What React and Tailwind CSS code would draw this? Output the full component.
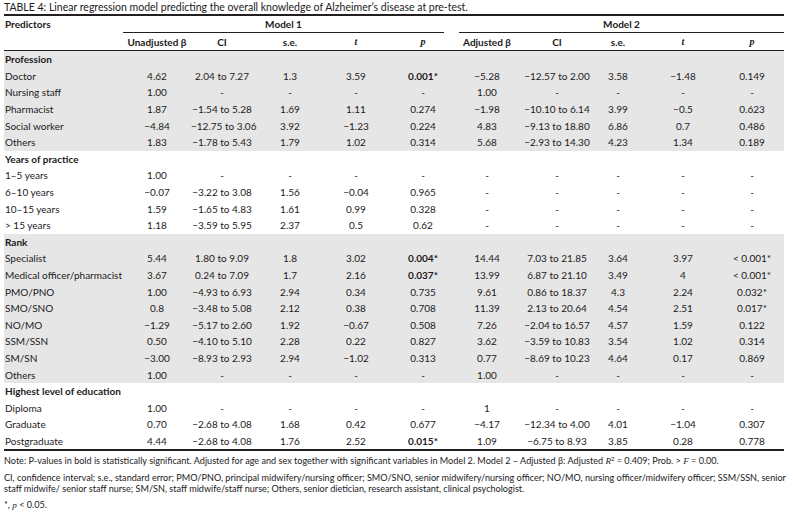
import React from "react";

const M = "\u2212";
const groups = [
  {
    title: "Profession",
    gray: true,
    rows: [
      ["Doctor", "4.62", "2.04 to 7.27", "1.3", "3.59", "B0.001*", `${M}5.28`, `${M}12.57 to 2.00`, "3.58", `${M}1.48`, "0.149"],
      ["Nursing staff", "1.00", "-", "-", "-", "-", "1.00", "-", "-", "-", "-"],
      ["Pharmacist", "1.87", `${M}1.54 to 5.28`, "1.69", "1.11", "0.274", `${M}1.98`, `${M}10.10 to 6.14`, "3.99", `${M}0.5`, "0.623"],
      ["Social worker", `${M}4.84`, `${M}12.75 to 3.06`, "3.92", `${M}1.23`, "0.224", "4.83", `${M}9.13 to 18.80`, "6.86", "0.7", "0.486"],
      ["Others", "1.83", `${M}1.78 to 5.43`, "1.79", "1.02", "0.314", "5.68", `${M}2.93 to 14.30`, "4.23", "1.34", "0.189"],
    ],
  },
  {
    title: "Years of practice",
    gray: false,
    rows: [
      ["1\u20135 years", "1.00", "-", "-", "-", "-", "-", "-", "-", "-", "-"],
      ["6\u201310 years", `${M}0.07`, `${M}3.22 to 3.08`, "1.56", `${M}0.04`, "0.965", "-", "-", "-", "-", "-"],
      ["10\u201315 years", "1.59", `${M}1.65 to 4.83`, "1.61", "0.99", "0.328", "-", "-", "-", "-", "-"],
      ["> 15 years", "1.18", `${M}3.59 to 5.95`, "2.37", "0.5", "0.62", "-", "-", "-", "-", "-"],
    ],
  },
  {
    title: "Rank",
    gray: true,
    rows: [
      ["Specialist", "5.44", "1.80 to 9.09", "1.8", "3.02", "B0.004*", "14.44", "7.03 to 21.85", "3.64", "3.97", "< 0.001*"],
      ["Medical officer/pharmacist", "3.67", "0.24 to 7.09", "1.7", "2.16", "B0.037*", "13.99", "6.87 to 21.10", "3.49", "4", "< 0.001*"],
      ["PMO/PNO", "1.00", `${M}4.93 to 6.93`, "2.94", "0.34", "0.735", "9.61", "0.86 to 18.37", "4.3", "2.24", "0.032*"],
      ["SMO/SNO", "0.8", `${M}3.48 to 5.08`, "2.12", "0.38", "0.708", "11.39", "2.13 to 20.64", "4.54", "2.51", "0.017*"],
      ["NO/MO", `${M}1.29`, `${M}5.17 to 2.60`, "1.92", `${M}0.67`, "0.508", "7.26", `${M}2.04 to 16.57`, "4.57", "1.59", "0.122"],
      ["SSM/SSN", "0.50", `${M}4.10 to 5.10`, "2.28", "0.22", "0.827", "3.62", `${M}3.59 to 10.83`, "3.54", "1.02", "0.314"],
      ["SM/SN", `${M}3.00`, `${M}8.93 to 2.93`, "2.94", `${M}1.02`, "0.313", "0.77", `${M}8.69 to 10.23`, "4.64", "0.17", "0.869"],
      ["Others", "1.00", "-", "-", "-", "-", "1.00", "-", "-", "-", "-"],
    ],
  },
  {
    title: "Highest level of education",
    gray: false,
    rows: [
      ["Diploma", "1.00", "-", "-", "-", "-", "1", "-", "-", "-", "-"],
      ["Graduate", "0.70", `${M}2.68 to 4.08`, "1.68", "0.42", "0.677", `${M}4.17`, `${M}12.34 to 4.00`, "4.01", `${M}1.04`, "0.307"],
      ["Postgraduate", "4.44", `${M}2.68 to 4.08`, "1.76", "2.52", "B0.015*", "1.09", `${M}6.75 to 8.93`, "3.85", "0.28", "0.778"],
    ],
  },
];

const GRID =
  "grid grid-cols-[119px_68px_62px_74px_58px_76px_52px_88px_34px_96px_42px_11px]";

function Cell({ v }) {
  const bold = v.startsWith("B");
  const text = bold ? v.slice(1) : v;
  return (
    <div className={`text-center whitespace-nowrap ${bold ? "font-bold" : ""}`}>{text}</div>
  );
}

function Row({ r }) {
  return (
    <div className={`${GRID} h-[16.6px] items-center`}>
      <div className="pl-[1px] whitespace-nowrap">{r[0]}</div>
      {r.slice(1).map((v, i) => (
        <Cell key={i} v={v} />
      ))}
      <div />
    </div>
  );
}

const serifI = { fontFamily: '"Liberation Serif", serif' };

export default function App() {
  return (
    <div
      className="bg-white w-[793px] h-[519px] pl-[4px] text-[#1c1a1b] text-[10px] leading-none"
      style={{ fontFamily: 'Lato, "Liberation Sans", sans-serif' }}
    >
      <div className="w-[780px]">
        <div className="h-[14px] flex items-center text-[10.5px] border-b-2 border-[#231f20] box-content">
          TABLE 4: Linear regression model predicting the overall knowledge of Alzheimer’s disease at pre-test.
        </div>
        <div className={`${GRID} h-[17px] font-bold`}>
          <div className="pl-[1px] flex items-center h-[16px]">Predictors</div>
          <div className="col-span-5 mr-[17px] border-b border-[#231f20] h-[17px] flex items-center justify-center">
            Model 1
          </div>
          <div className="col-span-6 ml-[-2px] border-b border-[#231f20] h-[17px] flex items-center justify-center">
            Model 2
          </div>
        </div>
        <div className={`${GRID} h-[18px] items-center font-bold border-b border-[#231f20]`}>
          <div />
          <div className="text-center whitespace-nowrap">Unadjusted β</div>
          <div className="text-center">CI</div>
          <div className="text-center">s.e.</div>
          <div className="text-center italic" style={serifI}>t</div>
          <div className="text-center italic" style={serifI}>p</div>
          <div className="text-center whitespace-nowrap">Adjusted β</div>
          <div className="text-center">CI</div>
          <div className="text-center">s.e.</div>
          <div className="text-center italic" style={serifI}>t</div>
          <div className="text-center italic" style={serifI}>p</div>
          <div />
        </div>
        <div className="border-b-2 border-[#231f20]">
          {groups.map((g) => (
            <div key={g.title} className={g.gray ? "bg-[#e6e6e6]" : "bg-white"}>
              <div className="h-[16.6px] flex items-center pl-[1px] font-bold">{g.title}</div>
              {g.rows.map((r, i) => (
                <Row key={i} r={r} />
              ))}
            </div>
          ))}
        </div>
        <div className="text-[9.1px] leading-[11px] mt-[4px] flex flex-col gap-[5px]">
          <div className="whitespace-nowrap">
            Note: P-values in bold is statistically significant. Adjusted for age and sex together with significant
            variables in Model 2. Model 2 – Adjusted β: Adjusted <span className="italic" style={serifI}>R</span>
            <sup className="text-[6px]">2</sup> = 0.409; Prob. &gt; <span className="italic" style={serifI}>F</span> = 0.00.
          </div>
          <div>
            <div className="whitespace-nowrap">
              CI, confidence interval; s.e., standard error; PMO/PNO, principal midwifery/nursing officer; SMO/SNO,
              senior midwifery/nursing officer; NO/MO, nursing officer/midwifery officer; SSM/SSN, senior
            </div>
            <div className="whitespace-nowrap">
              staff midwife/ senior staff nurse; SM/SN, staff midwife/staff nurse; Others, senior dietician, research
              assistant, clinical psychologist.
            </div>
          </div>
          <div>
            *, <span className="italic" style={serifI}>p</span> &lt; 0.05.
          </div>
        </div>
      </div>
    </div>
  );
}
